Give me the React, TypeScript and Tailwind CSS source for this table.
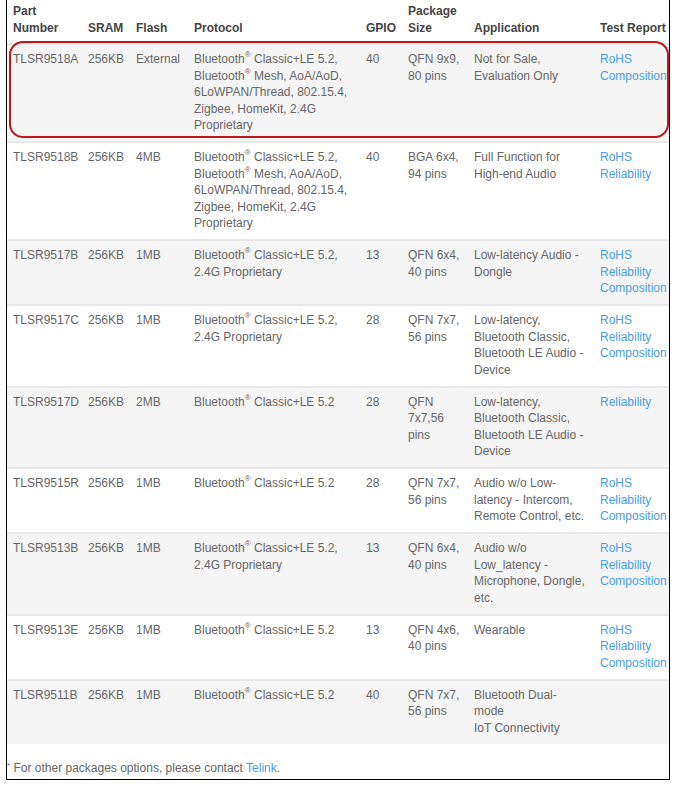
import React from 'react';

type Row = {
  part: string;
  flash: string;
  protocol: React.ReactNode[];
  gpio: string;
  pkg: string[];
  app: string[];
  reports: string[];
};

const Reg = () => (
  <sup className="relative -top-[1px] text-[8px] leading-none align-super">®</sup>
);

const fullProto = [
  <>Bluetooth<Reg /> Classic+LE 5.2,</>,
  <>Bluetooth<Reg /> Mesh, AoA/AoD,</>,
  '6LoWPAN/Thread, 802.15.4,',
  'Zigbee, HomeKit, 2.4G',
  'Proprietary',
];
const shortProto = [<>Bluetooth<Reg /> Classic+LE 5.2,</>, '2.4G Proprietary'];
const bareProto = [<>Bluetooth<Reg /> Classic+LE 5.2</>];
const all3 = ['RoHS', 'Reliability', 'Composition'];

const rows: Row[] = [
  { part: 'TLSR9518A', flash: 'External', protocol: fullProto, gpio: '40', pkg: ['QFN 9x9,', '80 pins'], app: ['Not for Sale,', 'Evaluation Only'], reports: ['RoHS', 'Composition'] },
  { part: 'TLSR9518B', flash: '4MB', protocol: fullProto, gpio: '40', pkg: ['BGA 6x4,', '94 pins'], app: ['Full Function for', 'High-end Audio'], reports: ['RoHS', 'Reliability'] },
  { part: 'TLSR9517B', flash: '1MB', protocol: shortProto, gpio: '13', pkg: ['QFN 6x4,', '40 pins'], app: ['Low-latency Audio -', 'Dongle'], reports: all3 },
  { part: 'TLSR9517C', flash: '1MB', protocol: shortProto, gpio: '28', pkg: ['QFN 7x7,', '56 pins'], app: ['Low-latency,', 'Bluetooth Classic,', 'Bluetooth LE Audio -', 'Device'], reports: all3 },
  { part: 'TLSR9517D', flash: '2MB', protocol: bareProto, gpio: '28', pkg: ['QFN', '7x7,56', 'pins'], app: ['Low-latency,', 'Bluetooth Classic,', 'Bluetooth LE Audio -', 'Device'], reports: ['Reliability'] },
  { part: 'TLSR9515R', flash: '1MB', protocol: bareProto, gpio: '28', pkg: ['QFN 7x7,', '56 pins'], app: ['Audio w/o Low-', 'latency - Intercom,', 'Remote Control, etc.'], reports: all3 },
  { part: 'TLSR9513B', flash: '1MB', protocol: shortProto, gpio: '13', pkg: ['QFN 6x4,', '40 pins'], app: ['Audio w/o', 'Low_latency -', 'Microphone, Dongle,', 'etc.'], reports: all3 },
  { part: 'TLSR9513E', flash: '1MB', protocol: bareProto, gpio: '13', pkg: ['QFN 4x6,', '40 pins'], app: ['Wearable'], reports: all3 },
  { part: 'TLSR9511B', flash: '1MB', protocol: bareProto, gpio: '40', pkg: ['QFN 7x7,', '56 pins'], app: ['Bluetooth Dual-', 'mode', 'IoT Connectivity'], reports: [] },
];

function Lines({ items }: { items: React.ReactNode[] }) {
  return (
    <>
      {items.map((item, i) => (
        <div key={i} className="whitespace-nowrap">{item}</div>
      ))}
    </>
  );
}

export default function App() {
  const td = 'align-top pl-[6px] pt-[6px] pb-[7.5px]';
  const th = 'align-bottom text-left font-bold leading-[17px] pl-[6px] pt-[3px] pb-[6px]';

  return (
    <div className="bg-white w-[677px] h-[791px]" style={{ fontFamily: '"Liberation Sans", Arial, sans-serif' }}>
      <div className="relative ml-[6px] w-[664px] border-l border-r border-b border-black text-[12px] leading-[16.5px] text-[#666]">
        <table className="w-full table-fixed border-collapse">
          <colgroup>
            <col className="w-[75px]" />
            <col className="w-[48px]" />
            <col className="w-[58px]" />
            <col className="w-[172px]" />
            <col className="w-[42px]" />
            <col className="w-[66px]" />
            <col className="w-[126px]" />
            <col className="w-[75px]" />
          </colgroup>
          <thead>
            <tr className="text-[#444]">
              <th className={th + ' pl-[5px]'}>Part<br />Number</th>
              <th className={th}>SRAM</th>
              <th className={th}>Flash</th>
              <th className={th}>Protocol</th>
              <th className={th}>GPIO</th>
              <th className={th}>Package<br />Size</th>
              <th className={th}>Application</th>
              <th className={th + ' whitespace-nowrap'}>Test Report</th>
            </tr>
          </thead>
          <tbody>
            {rows.map((r, i) => (
              <tr key={r.part} className={'border-t-2 border-[#e8e8e8] ' + (i % 2 === 0 ? 'bg-[#f5f5f5]' : 'bg-white')}>
                <td className={td + ' pl-[5px]'}>{r.part}</td>
                <td className={td}>256KB</td>
                <td className={td}>{r.flash}</td>
                <td className={td}><Lines items={r.protocol} /></td>
                <td className={td}>{r.gpio}</td>
                <td className={td}><Lines items={r.pkg} /></td>
                <td className={td}><Lines items={r.app} /></td>
                <td className={td + ' text-[#4a9ee0]'}><Lines items={r.reports} /></td>
              </tr>
            ))}
          </tbody>
        </table>

        <p className="mt-[16px] pb-[3px] whitespace-nowrap">
          <sup className="text-[8px] leading-none">*</sup> For other packages options, please contact{' '}
          <span className="text-[#4a9ee0]">Telink</span>.
        </p>

        {/* red highlight around first row */}
        <div className="pointer-events-none absolute left-[2px] top-[41px] h-[97px] w-[660px] rounded-[14px] border-2 border-[#c0161c]" />
      </div>
    </div>
  );
}
